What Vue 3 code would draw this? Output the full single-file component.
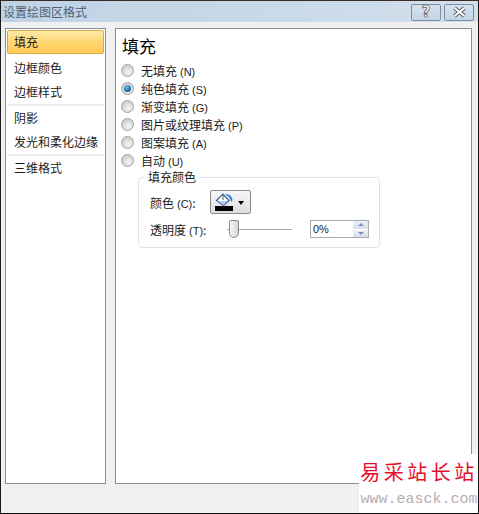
<script setup>
const navGroups = [
  [{ label: '填充', active: true }, { label: '边框颜色' }, { label: '边框样式' }],
  [{ label: '阴影' }, { label: '发光和柔化边缘' }],
  [{ label: '三维格式' }]
]
const fills = [
  { label: '无填充', key: 'N' },
  { label: '纯色填充', key: 'S', checked: true },
  { label: '渐变填充', key: 'G' },
  { label: '图片或纹理填充', key: 'P' },
  { label: '图案填充', key: 'A' },
  { label: '自动', key: 'U' }
]
</script>

<template>
  <div class="dialog">
    <div class="titlebar">
      <span class="title">设置绘图区格式</span>
      <div class="title-buttons">
        <button class="title-btn" type="button"><span class="help">?</span></button>
        <button class="title-btn" type="button">
          <svg width="15" height="12" viewBox="0 0 15 12">
            <path d="M2.500 2 12.500 10M12.500 2 2.500 10" stroke="#565e6a" stroke-width="4" />
            <path d="M2.500 2 12.500 10M12.500 2 2.500 10" stroke="#fff" stroke-width="2" />
          </svg>
        </button>
      </div>
    </div>

    <div class="body">
      <div class="nav panel">
        <div v-for="(group, g) in navGroups" :key="g" class="nav-group">
          <div v-for="item in group" :key="item.label" class="nav-item" :class="{ active: item.active }">
            {{ item.label }}
          </div>
        </div>
      </div>

      <div class="content panel">
        <h1 class="heading">填充</h1>
        <div class="radios">
          <div v-for="f in fills" :key="f.key" class="radio-row">
            <span class="radio" :class="{ checked: f.checked }"></span>
            <span class="radio-label">{{ f.label }}<span class="key">({{ f.key }})</span></span>
          </div>
        </div>

        <fieldset class="group">
          <legend>填充颜色</legend>
          <div class="row color-row">
            <span class="field-label">颜色<span class="key">(C)</span>:</span>
            <button class="color-btn" type="button">
              <svg width="20" height="20" viewBox="0 0 20 20">
                <path d="M2.500 7.500 9 1l6 6.500-5.500 5z" fill="#fff" stroke="#2f5fa8" stroke-width="1.200" />
                <path d="M4 8h9.500L9.500 12z" fill="#b5cdec" />
                <path d="M9 2v5" stroke="#555" />
                <path d="M11 1c4 0 7 2 7.500 6l-1 2-1.500-3c-1-2-3-3.500-5-5z" fill="#3f7fd0" />
                <rect x="1" y="13" width="18" height="5" fill="#000" />
              </svg>
              <span class="caret"></span>
            </button>
          </div>
          <div class="row">
            <span class="field-label">透明度<span class="key">(T)</span>:</span>
            <div class="slider">
              <span class="thumb"></span>
            </div>
            <div class="spinner">
              <span class="spin-value">0%</span>
              <span class="spin-arrows">
                <span class="spin up"></span>
                <span class="spin down"></span>
              </span>
            </div>
          </div>
        </fieldset>
      </div>
    </div>

    <div class="watermark">
      <div class="wm-cn">易采站长站</div>
      <div class="wm-en">www.easck.com</div>
    </div>
  </div>
</template>

<style scoped>
.dialog {
  position: relative;
  width: 479px;
  height: 514px;
  box-sizing: border-box;
  display: flex;
  flex-direction: column;
  background: #f0f0f0;
  border-top: 1px solid #3a2c20;
  border-left: 1px solid #1a1a1a;
  border-right: 1px solid #1a1a1a;
  border-bottom: 1px solid #111;
  font-family: "Noto Sans CJK SC", "Liberation Sans", sans-serif;
  font-size: 12px;
  color: #1c1c1c;
  overflow: hidden;
}

.titlebar {
  height: 21px;
  flex-shrink: 0;
  display: flex;
  align-items: center;
  justify-content: space-between;
  padding: 0 4px 0 2px;
  background: linear-gradient(90deg, #bfd3e5 0%, #c8d9e8 55%, #d3e0ec 100%);
}

.title {
  color: #4f6275;
  font-size: 12px;
}

.title-buttons {
  display: flex;
  gap: 3px;
  margin-top: 1px;
}

.title-btn {
  width: 30px;
  height: 17px;
  padding: 0;
  display: flex;
  align-items: center;
  justify-content: center;
  border: 1px solid #7d8ea3;
  border-radius: 2px;
  background: linear-gradient(#d6e2ee, #c3d4e4);
}

.help {
  font-family: "DejaVu Sans", sans-serif;
  font-weight: 700;
  font-size: 15px;
  line-height: 15px;
  color: #fff;
  -webkit-text-stroke: 0.7px #4e5660;
}

.body {
  flex: 1;
  display: flex;
  gap: 9px;
  padding: 6px 6px 29px 4px;
  min-height: 0;
}

.panel {
  box-sizing: border-box;
  background: #fff;
  border: 1px solid #8c8c98;
}

.nav {
  width: 101px;
  padding: 1px;
}

.nav-group {
  border-bottom: 2px solid #f0f0f4;
}

.nav-group:last-child {
  border-bottom: none;
}

.nav-item {
  height: 24px;
  line-height: 24px;
  padding-left: 7px;
}

.nav-item.active {
  box-sizing: border-box;
  height: 24px;
  line-height: 22px;
  padding-left: 6px;
  border: 1px solid #d8a848;
  border-radius: 2px;
  background: linear-gradient(#ffe8a6, #ffd66f 55%, #ffcc55);
  margin-bottom: 2px;
}

.content {
  flex: 1;
  padding: 5px 0 0 5px;
}

.heading {
  margin: 0 0 3px 1px;
  font-size: 17px;
  line-height: 24px;
  font-weight: 400;
  color: #000;
}

.radios {
  display: flex;
  flex-direction: column;
}

.radio-row {
  height: 18px;
  display: flex;
  align-items: center;
  gap: 7px;
}

.radio {
  width: 11px;
  height: 11px;
  border-radius: 50%;
  border: 1px solid #a2a2a2;
  background: radial-gradient(circle at 60% 65%, #f6f6f6, #cfcfcf 70%);
  display: flex;
  align-items: center;
  justify-content: center;
}

.radio.checked::after {
  content: "";
  width: 7px;
  height: 7px;
  border-radius: 50%;
  background: radial-gradient(circle at 40% 30%, #6fc0ea, #0d5f95 70%);
}

.key {
  margin-left: 3px;
  font-family: "Liberation Sans", sans-serif;
  font-size: 11px;
}

.group {
  box-sizing: border-box;
  width: 242px;
  height: 79px;
  margin: 0 0 0 17px;
  padding: 5px 0 0 11px;
  border: 1px solid #dfe3e8;
  border-radius: 4px;
}

.group legend {
  padding: 0 3px;
  margin-left: -5px;
  line-height: 16px;
  color: #1c1c1c;
}

.row {
  display: flex;
  align-items: center;
  height: 24px;
}

.color-row {
  margin-bottom: 3px;
}

.field-label {
  width: 60px;
  flex-shrink: 0;
}

.color-btn {
  box-sizing: border-box;
  width: 41px;
  height: 24px;
  padding: 1px 0 0 3px;
  display: flex;
  align-items: center;
  gap: 4px;
  border: 1px solid #8a8a8a;
  border-radius: 2px;
  background: linear-gradient(#f7f7f7, #dedede);
}

.caret {
  width: 0;
  height: 0;
  border-left: 3.5px solid transparent;
  border-right: 3.5px solid transparent;
  border-top: 4px solid #000;
}

.slider {
  position: relative;
  width: 65px;
  height: 1px;
  background: #a9a9a9;
  margin-left: 17px;
}

.thumb {
  position: absolute;
  left: 2px;
  top: -9px;
  box-sizing: border-box;
  width: 10px;
  height: 18px;
  border: 1px solid #8a8a8a;
  border-radius: 2px 2px 5px 5px;
  background: linear-gradient(90deg, #f5f5f5, #d6d6d6);
}

.spinner {
  box-sizing: border-box;
  width: 59px;
  height: 18px;
  margin-left: 18px;
  display: flex;
  align-items: center;
  justify-content: space-between;
  border: 1px solid #a5acb5;
  background: #fff;
}

.spin-value {
  padding-left: 2px;
  font-family: "Liberation Sans", sans-serif;
  font-size: 11px;
}

.spin-arrows {
  width: 15px;
  height: 16px;
  display: flex;
  flex-direction: column;
}

.spin {
  flex: 1;
  display: flex;
  align-items: center;
  justify-content: center;
  background: linear-gradient(#eef2f6, #d8dee6);
}

.spin.up {
  border-bottom: 1px solid #fff;
}

.spin::after {
  content: "";
  width: 0;
  height: 0;
  border-left: 3.5px solid transparent;
  border-right: 3.5px solid transparent;
}

.spin.up::after {
  border-bottom: 3px solid #6f8fc0;
}

.spin.down::after {
  border-top: 3px solid #6f8fc0;
}

.watermark {
  position: absolute;
  right: -1px;
  bottom: -1px;
  width: 120px;
  height: 60px;
  background: #fff;
  text-align: center;
}

.wm-cn {
  margin-top: 4px;
  color: #e60f2a;
  font-size: 20px;
  line-height: 28px;
  letter-spacing: 3.5px;
  white-space: nowrap;
  font-family: "Noto Sans CJK SC", sans-serif;
}

.wm-en {
  margin-top: 4px;
  color: #b9aeb2;
  font-family: "Liberation Mono", monospace;
  font-size: 15px;
  line-height: 20px;
  white-space: nowrap;
}
</style>
